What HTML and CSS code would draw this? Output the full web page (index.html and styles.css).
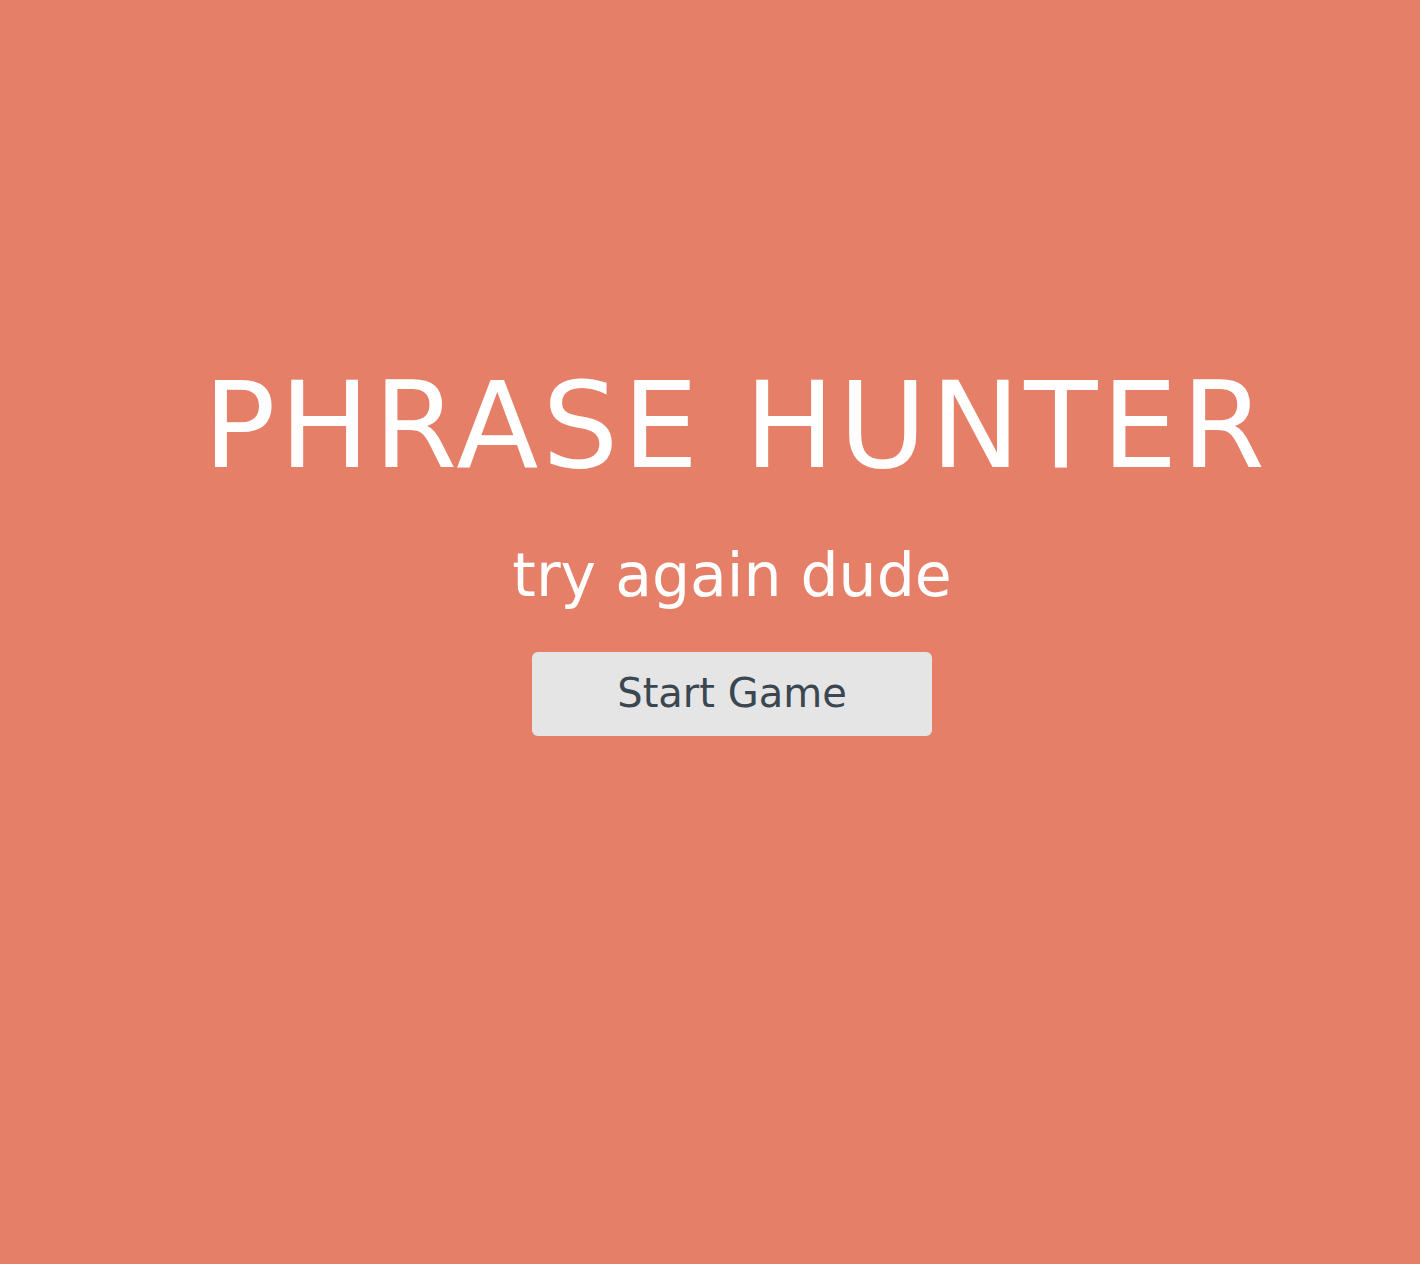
FILE: index.html
```html
<!DOCTYPE html>
<html lang="en">
<head>
<meta charset="utf-8">
<title>Phrase Hunter</title>
<link rel="stylesheet" href="styles.css">
</head>
<body>
<div class="overlay lose">
  <h2 class="title">PHRASE HUNTER</h2>
  <h1 class="game-over-message">try again dude</h1>
  <button class="btn-reset">Start Game</button>
</div>
</body>
</html>
```
FILE: styles.css
```css
html, body {
  margin: 0;
  padding: 0;
}
body {
  background: #e67f67;
  font-family: "DejaVu Sans", "Open Sans", sans-serif;
  min-height: 1264px;
}
.overlay {
  display: flex;
  flex-direction: column;
  align-items: center;
  padding: 366px 0 0 44px;
  box-sizing: border-box;
  min-height: 1264px;
}
.title {
  margin: 0 -4px 0 0;
  font-size: 120px;
  line-height: 120px;
  font-weight: 400;
  color: #ffffff;
  letter-spacing: 4px;
  padding-left: 4px;
}
.game-over-message {
  margin: 59px 0 0;
  font-size: 60px;
  line-height: 60px;
  font-weight: 400;
  color: #ffffff;
}
.btn-reset {
  margin-top: 47px;
  width: 400px;
  height: 84px;
  padding: 21px 0 23px;
  box-sizing: border-box;
  border: none;
  border-radius: 6px;
  background: #e5e5e5;
  color: #3a4750;
  font-family: "DejaVu Sans", "Open Sans", sans-serif;
  font-size: 40px;
  line-height: 40px;
  font-weight: 400;
}
```
